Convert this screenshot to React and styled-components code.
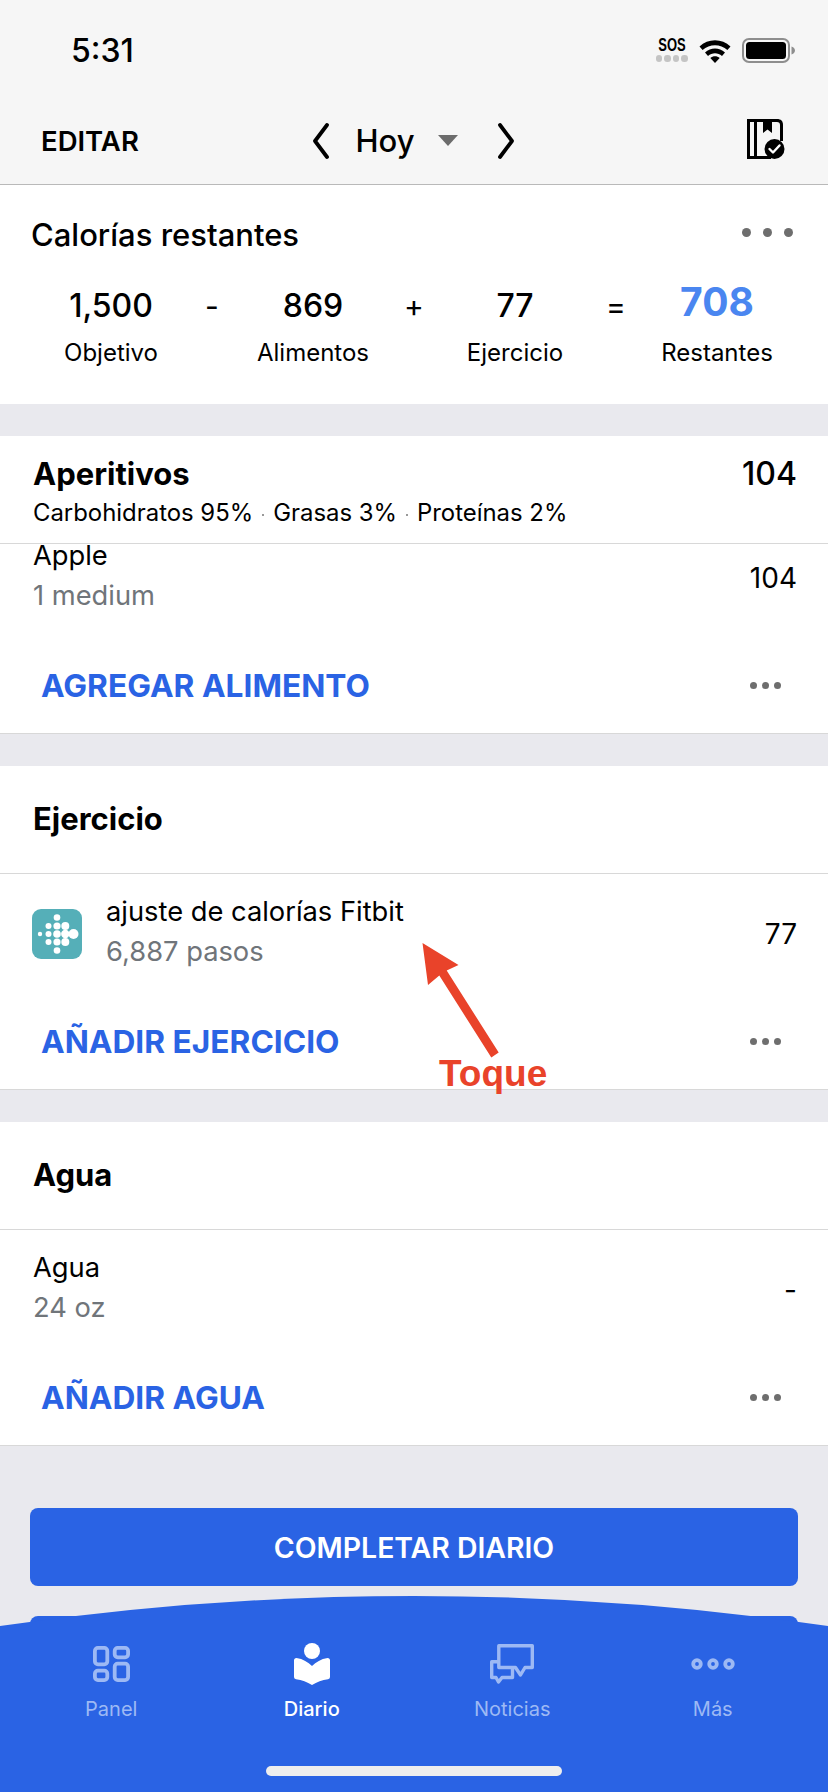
import React from 'react';
import styled, { createGlobalStyle } from 'styled-components';

const Global = createGlobalStyle`
  html, body {
    margin: 0;
    padding: 0;
    height: 1792px;
    overflow: hidden;
    background: #e9e9ee;
    font-family: 'Inter', 'Liberation Sans', sans-serif;
    color: #000;
  }
  * { box-sizing: border-box; }
`;

const Page = styled.div`
  position: relative;
  width: 828px;
  height: 1792px;
  overflow: hidden;
  background: #e9e9ee;
`;

const Top = styled.header`
  height: 185px;
  background: #f6f6f6;
  border-bottom: 1px solid #b9b9b9;
`;

const StatusBar = styled.div`
  height: 100px;
  display: flex;
  align-items: center;
  justify-content: space-between;
  padding: 0 33px 0 71px;
`;

const Clock = styled.span`
  font-size: 32px;
  font-weight: 500;
`;

const StatusIcons = styled.div`
  display: flex;
  align-items: center;
  gap: 11px;
`;

const Sos = styled.div`
  display: flex;
  flex-direction: column;
  align-items: center;
  gap: 3px;
  width: 33px;
`;

const SosText = styled.span`
  font-family: 'Liberation Sans', sans-serif;
  font-size: 18px;
  line-height: 14px;
  font-weight: 700;
  transform: scaleX(0.72);
`;

const SosDots = styled.div`
  display: flex;
  gap: 2px;
  i {
    width: 6.5px;
    height: 6.5px;
    border-radius: 50%;
    background: #c4c4c4;
  }
`;

const NavBar = styled.nav`
  height: 84px;
  display: grid;
  grid-template-columns: 1fr auto 1fr;
  align-items: center;
  padding: 0 42px 3px 41px;
`;

const EditButton = styled.span`
  font-size: 27.5px;
  font-weight: 600;
`;

const DatePicker = styled.div`
  display: flex;
  align-items: center;
`;

const DateLabel = styled.span`
  font-size: 31px;
  font-weight: 500;
  margin: 0 23px 0 26px;
`;

const Caret = styled.span`
  width: 0;
  height: 0;
  border-left: 10px solid transparent;
  border-right: 10px solid transparent;
  border-top: 11px solid #6c6c6c;
  margin-right: 40px;
`;

const NavRight = styled.div`
  display: flex;
  justify-content: flex-end;
  margin-top: -4px;
`;

const Summary = styled.section`
  height: 219px;
  background: #fff;
  padding: 32px 31px 0 31px;
`;

const SummaryHead = styled.div`
  display: flex;
  justify-content: space-between;
  align-items: flex-start;
`;

const SummaryTitle = styled.h2`
  margin: 0;
  font-size: 31px;
  line-height: 36px;
  font-weight: 500;
`;

const DotsMenu = styled.div`
  display: flex;
  gap: ${p => p.$gap}px;
  margin: ${p => p.$margin};
  i {
    display: block;
    width: ${p => p.$size}px;
    height: ${p => p.$size}px;
    border-radius: 50%;
    background: #6e6e6e;
  }
`;

const SummaryGrid = styled.div`
  display: grid;
  grid-template-columns: 168px 34px 168px 34px 168px 34px 168px;
  margin: 28px 0 0 -4px;
`;

const Cell = styled.div`
  display: flex;
  flex-direction: column;
  align-items: center;
`;

const Amount = styled.span`
  height: 50px;
  display: flex;
  align-items: ${p => (p.$accent ? 'flex-start' : 'center')};
  font-size: ${p => (p.$accent ? 39 : 32)}px;
  line-height: ${p => (p.$accent ? 42 : 50)}px;
  font-weight: ${p => (p.$accent ? 700 : 500)};
  color: ${p => (p.$accent ? '#4a86f0' : '#000')};
`;

const AmountLabel = styled.span`
  font-size: 24px;
  line-height: 30px;
  margin-top: 7px;
`;

const Operator = styled.span`
  height: 50px;
  display: flex;
  align-items: center;
  justify-content: center;
  font-size: 30px;
  font-weight: 400;
`;

const Sections = styled.div`
  display: flex;
  flex-direction: column;
  gap: 32px;
  padding-top: 32px;
`;

const Card = styled.section`
  background: #fff;
  border-bottom: 1px solid #d8d8d8;
`;

const CardHead = styled.div`
  height: 108px;
  display: flex;
  align-items: center;
  padding: 0 31px 2px 33px;
  border-bottom: 1px solid #d8d8d8;
`;

const CardTitle = styled.h3`
  margin: 0;
  font-size: 31px;
  line-height: 36px;
  font-weight: 700;
`;

const MealHead = styled(CardHead)`
  display: grid;
  grid-template-columns: 1fr auto;
  align-content: start;
  align-items: start;
  padding-top: 20px;
`;

const MealTotal = styled.span`
  font-size: 32px;
  line-height: 36px;
  font-weight: 500;
`;

const Macros = styled.div`
  grid-column: 1 / -1;
  display: flex;
  align-items: center;
  font-size: 23.9px;
  line-height: 30px;
  margin-top: 6px;
  i {
    width: 2px;
    height: 2px;
    margin: 4px 9px 0;
    border-radius: 50%;
    background: #777;
  }
`;

const Entry = styled.div`
  display: flex;
  align-items: center;
  padding: 0 31px 0 33px;
  height: ${p => p.$h}px;
`;

const EntryText = styled.div`
  flex: 1;
  display: flex;
  flex-direction: column;
  gap: ${p => p.$gap}px;
  margin-top: ${p => p.$top}px;
`;

const EntryName = styled.span`
  font-size: 27.3px;
  line-height: 32px;
`;

const EntryMeta = styled.span`
  font-size: 27.3px;
  line-height: 32px;
  color: #70757a;
`;

const EntryValue = styled.span`
  font-size: 28px;
  line-height: 32px;
  margin-top: ${p => p.$top}px;
`;

const AppIcon = styled.svg`
  width: 50px;
  height: 50px;
  margin: -12px 24px 0 -1px;
  flex: none;
`;

const AddRow = styled.div`
  height: 84px;
  display: flex;
  align-items: center;
  justify-content: space-between;
  padding: 0 47px 11px 41px;
`;

const AddLink = styled.span`
  font-size: 31.7px;
  font-weight: 700;
  color: #2a63e4;
`;

const Actions = styled.div`
  padding: 62px 30px 0;
  display: flex;
  flex-direction: column;
  gap: 30px;
`;

const PrimaryButton = styled.div`
  height: 78px;
  border-radius: 8px;
  background: #2a63e4;
  color: #fff;
  display: flex;
  align-items: center;
  justify-content: center;
  font-size: 28.4px;
  font-weight: 600;
`;

const TabBar = styled.footer`
  position: absolute;
  left: 0;
  right: 0;
  bottom: 0;
  height: 196px;
  background: #2a63e4;
  clip-path: path('M0 30 Q414 -30 828 30 V196 H0 Z');
`;

const Tabs = styled.div`
  display: grid;
  grid-template-columns: repeat(4, 1fr);
  padding: 46px 15px 0 11px;
`;

const Tab = styled.div`
  display: flex;
  flex-direction: column;
  align-items: center;
  color: ${p => (p.$active ? '#fff' : '#9db9f4')};
  font-size: 20px;
  font-weight: ${p => (p.$active ? 500 : 400)};
`;

const TabIcon = styled.div`
  height: 44px;
  flex: none;
  display: flex;
  align-items: center;
  justify-content: center;
`;

const TabLabel = styled.span`
  line-height: 24px;
  margin-top: 11px;
`;

const HomeBar = styled.div`
  position: absolute;
  left: 266px;
  bottom: 16px;
  width: 296px;
  height: 10px;
  border-radius: 5px;
  background: #eeeeee;
`;

const Annotation = styled.div`
  position: absolute;
  left: 418px;
  top: 940px;
  width: 140px;
  height: 160px;
`;

const AnnotationLabel = styled.span`
  position: absolute;
  left: 21px;
  top: 113px;
  font-family: 'Liberation Sans', sans-serif;
  font-size: 37px;
  line-height: 42px;
  font-weight: 700;
  color: #e9432a;
`;

const Chevron = ({ flip }) => (
  <svg width="16" height="36" viewBox="0 0 16 36" fill="none" stroke="#000" strokeWidth="3.8" strokeLinecap="round" strokeLinejoin="round">
    <path d={flip ? 'M2 2 L14 18 L2 34' : 'M14 2 L2 18 L14 34'} />
  </svg>
);

const Wifi = () => (
  <svg width="32" height="25" viewBox="0 0 32 25">
    <path d="M0.5 8.5 C9 0 23 0 31.5 8.5 L28.4 12 C21.5 5.5 10.5 5.5 3.6 12 Z" />
    <path d="M6 14.5 C11.8 9.2 20.2 9.2 26 14.5 L23 18 C19 14.3 13 14.3 9 18 Z" />
    <path d="M11.3 20 C14 17.8 18 17.8 20.7 20 L16 25 Z" />
  </svg>
);

const Battery = () => (
  <svg width="53" height="25" viewBox="0 0 53 25">
    <rect x="1" y="1" width="46" height="23" rx="6" fill="none" stroke="#8e8e8e" strokeWidth="2" />
    <rect x="4" y="4" width="40" height="17" rx="3.5" fill="#000" />
    <path d="M49.5 8.5 C52 9.5 53 11 53 12.5 C53 14 52 15.5 49.5 16.5 Z" fill="#8e8e8e" />
  </svg>
);

const PlanIcon = () => (
  <svg width="40" height="40" viewBox="0 0 40 40">
    <path d="M1 0 H11 V40 H1 Z M4 3 V37 H8 V3 Z" />
    <path d="M11 0 H31 C35 0 37 2 37 6 V22 H34 V6 C34 4 33 3 31 3 H26 V14 L21.5 10.5 L17 14 V3 H11 Z" />
    <path d="M11 37 H25 V40 H11 Z" />
    <circle cx="28.5" cy="30" r="10" />
    <path d="M23.5 30 L27 33.5 L33.5 26.5" fill="none" stroke="#fff" strokeWidth="2.4" strokeLinecap="round" strokeLinejoin="round" />
  </svg>
);

const FitbitIcon = () => {
  const dots = [
    [25, 8.5, 3.3], [25, 17, 3.6], [25, 25, 3.8], [25, 33, 3.6], [25, 41.5, 3.3],
    [16.5, 17, 3], [16.5, 25, 3], [16.5, 33, 3], [8, 25, 2.2],
    [33.3, 17, 4], [33.3, 25, 4.2], [33.3, 33, 4], [41.5, 25, 5],
  ];
  return (
    <AppIcon viewBox="0 0 50 50">
      <rect width="50" height="50" rx="9" fill="#55afb8" />
      {dots.map(([cx, cy, r]) => <circle key={`${cx}-${cy}`} cx={cx} cy={cy} r={r} fill="#fff" />)}
    </AppIcon>
  );
};

const PanelIcon = () => (
  <svg width="37" height="36" viewBox="0 0 37 36" fill="none" stroke="#9db9f4" strokeWidth="3.8">
    <rect x="1.9" y="1.9" width="12.4" height="16.4" rx="3" />
    <rect x="21.7" y="1.9" width="13.4" height="9.4" rx="3" />
    <rect x="1.9" y="24.7" width="12.4" height="9.4" rx="3" />
    <rect x="21.7" y="17.7" width="13.4" height="16.4" rx="3" />
  </svg>
);

const DiaryIcon = () => (
  <svg width="36" height="42" viewBox="0 0 36 42" fill="#fff">
    <circle cx="18" cy="8" r="8" />
    <path d="M0 17.500 Q0 15 2.500 15 C9 16 14 19 18 23 C22 19 27 16 33.500 15 Q36 15 36 17.500 V34 Q36 36 34 36.300 C28 37 23 39 18 42 C13 39 8 37 2 36.300 Q0 36 0 34 Z" />
  </svg>
);

const NewsIcon = () => (
  <svg width="44" height="40" viewBox="0 0 44 40" fill="none" stroke="#9db9f4" strokeWidth="3.4" strokeLinejoin="round">
    <path d="M8.800 1.700 H42.300 V23.500 H35 L30.500 31 L25.500 23.500 H8.800 Z" />
    <path d="M8.800 17.700 H1.700 V33.500 H6 L8.500 38 L12 33.500 H22.500 V25" />
  </svg>
);

const MoreIcon = () => (
  <svg width="44" height="12" viewBox="0 0 44 12" fill="none" stroke="#9db9f4" strokeWidth="3.8">
    <circle cx="6" cy="6" r="3.8" />
    <circle cx="22" cy="6" r="3.8" />
    <circle cx="38" cy="6" r="3.8" />
  </svg>
);

const TapArrow = () => (
  <svg width="90" height="120" viewBox="0 0 90 120">
    <path d="M4.500 3 L40.500 25 L28.700 30.500 L80.700 112.500 L73.300 117.500 L21.300 35.500 L10 45 Z" fill="#e9432a" />
  </svg>
);

const RowDots = () => (
  <DotsMenu $gap={5} $size={7} $margin="0">
    <i /><i /><i />
  </DotsMenu>
);

const summary = [
  { amount: '1,500', label: 'Objetivo', op: '-' },
  { amount: '869', label: 'Alimentos', op: '+' },
  { amount: '77', label: 'Ejercicio', op: '=' },
  { amount: '708', label: 'Restantes', accent: true },
];

const tabs = [
  { label: 'Panel', icon: <PanelIcon /> },
  { label: 'Diario', icon: <DiaryIcon />, active: true },
  { label: 'Noticias', icon: <NewsIcon /> },
  { label: 'Más', icon: <MoreIcon /> },
];

export default function App() {
  return (
    <Page>
      <Global />
      <Top>
        <StatusBar>
          <Clock>5:31</Clock>
          <StatusIcons>
            <Sos>
              <SosText>SOS</SosText>
              <SosDots><i /><i /><i /><i /></SosDots>
            </Sos>
            <Wifi />
            <Battery />
          </StatusIcons>
        </StatusBar>
        <NavBar>
          <EditButton>EDITAR</EditButton>
          <DatePicker>
            <Chevron />
            <DateLabel>Hoy</DateLabel>
            <Caret />
            <Chevron flip />
          </DatePicker>
          <NavRight><PlanIcon /></NavRight>
        </NavBar>
      </Top>

      <Summary>
        <SummaryHead>
          <SummaryTitle>Calorías restantes</SummaryTitle>
          <DotsMenu $gap={12} $size={9} $margin="11px 4px 0 0"><i /><i /><i /></DotsMenu>
        </SummaryHead>
        <SummaryGrid>
          {summary.map(item => (
            <React.Fragment key={item.label}>
              <Cell>
                <Amount $accent={item.accent}>{item.amount}</Amount>
                <AmountLabel>{item.label}</AmountLabel>
              </Cell>
              {item.op && <Operator>{item.op}</Operator>}
            </React.Fragment>
          ))}
        </SummaryGrid>
      </Summary>

      <Sections>
        <Card>
          <MealHead>
            <CardTitle>Aperitivos</CardTitle>
            <MealTotal>104</MealTotal>
            <Macros>Carbohidratos 95%<i />Grasas 3%<i />Proteínas 2%</Macros>
          </MealHead>
          <Entry $h={105}>
            <EntryText $gap={8} $top={-42}>
              <EntryName>Apple</EntryName>
              <EntryMeta>1 medium</EntryMeta>
            </EntryText>
            <EntryValue $top={-38}>104</EntryValue>
          </Entry>
          <AddRow>
            <AddLink>AGREGAR ALIMENTO</AddLink>
            <RowDots />
          </AddRow>
        </Card>

        <Card>
          <CardHead><CardTitle>Ejercicio</CardTitle></CardHead>
          <Entry $h={131}>
            <FitbitIcon />
            <EntryText $gap={8} $top={-15}>
              <EntryName>ajuste de calorías Fitbit</EntryName>
              <EntryMeta>6,887 pasos</EntryMeta>
            </EntryText>
            <EntryValue $top={-12}>77</EntryValue>
          </Entry>
          <AddRow>
            <AddLink>AÑADIR EJERCICIO</AddLink>
            <RowDots />
          </AddRow>
        </Card>

        <Card>
          <CardHead><CardTitle>Agua</CardTitle></CardHead>
          <Entry $h={131}>
            <EntryText $gap={8} $top={-15}>
              <EntryName>Agua</EntryName>
              <EntryMeta>24 oz</EntryMeta>
            </EntryText>
            <EntryValue $top={-12}>-</EntryValue>
          </Entry>
          <AddRow>
            <AddLink>AÑADIR AGUA</AddLink>
            <RowDots />
          </AddRow>
        </Card>
      </Sections>

      <Actions>
        <PrimaryButton>COMPLETAR DIARIO</PrimaryButton>
        <PrimaryButton />
      </Actions>

      <Annotation>
        <TapArrow />
        <AnnotationLabel>Toque</AnnotationLabel>
      </Annotation>

      <TabBar>
        <Tabs>
          {tabs.map(tab => (
            <Tab key={tab.label} $active={tab.active}>
              <TabIcon>{tab.icon}</TabIcon>
              <TabLabel>{tab.label}</TabLabel>
            </Tab>
          ))}
        </Tabs>
        <HomeBar />
      </TabBar>
    </Page>
  );
}
